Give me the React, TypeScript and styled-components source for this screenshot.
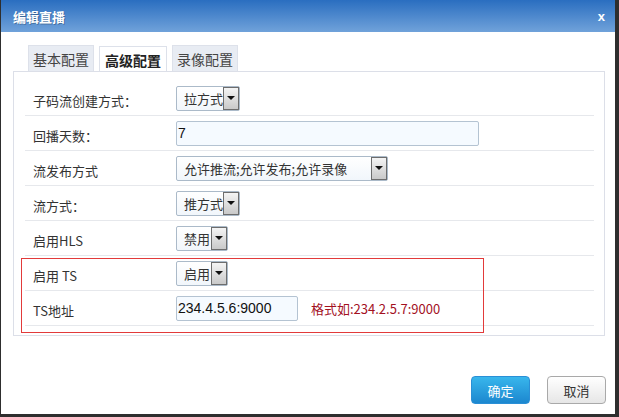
import styled, { createGlobalStyle } from "styled-components";

const GlobalStyle = createGlobalStyle`
  html, body {
    margin: 0;
    padding: 0;
    background: #2e2e2e;
  }
  body {
    font-family: "Noto Sans CJK SC", "Liberation Sans", sans-serif;
    font-size: 13px;
    color: #333;
  }
`;

const Dialog = styled.div`
  margin-left: 1px;
  width: 614px;
  height: 414px;
  background: #fff;
  display: flex;
  flex-direction: column;
`;

const Header = styled.div`
  height: 32px;
  display: flex;
  align-items: center;
  justify-content: space-between;
  padding: 0 10px 0 12px;
  background: linear-gradient(to bottom, #2a6ec0, #70a2da);
`;

const Title = styled.h1`
  margin: 0;
  color: #fff;
  font-size: 13px;
  font-weight: bold;
  text-shadow: 1px 1px 0 rgba(0, 0, 0, 0.25);
`;

const Close = styled.span`
  color: #fff;
  font-family: "Liberation Sans", sans-serif;
  font-weight: bold;
  font-size: 13px;
  line-height: 1;
`;

const Body = styled.div`
  padding: 13px 10px 0 12px;
`;

const TabBar = styled.div`
  display: flex;
  gap: 5px;
  padding-left: 15px;
`;

const Tab = styled.div<{ $active?: boolean }>`
  height: 26px;
  padding: 0 ${(p) => (p.$active ? "5px" : "4px")};
  box-sizing: border-box;
  display: flex;
  align-items: center;
  border: 1px solid #dde1ea;
  border-bottom: none;
  background: ${(p) => (p.$active ? "#fff" : "#e8ecf3")};
  color: ${(p) => (p.$active ? "#222" : "#444")};
  font-weight: ${(p) => (p.$active ? "bold" : "normal")};
  font-size: 14px;
  position: relative;
  top: ${(p) => (p.$active ? "1px" : "0")};
`;

const Panel = styled.div`
  position: relative;
  height: 265px;
  box-sizing: border-box;
  border: 1px solid #dcdfe8;
  padding: 9px 10px 0 11px;
`;

const Row = styled.div`
  display: flex;
  align-items: center;
  height: 34px;
  border-bottom: 1px solid #e6e8ec;
  padding-left: 8px;
`;

const Label = styled.div`
  width: 143px;
  flex-shrink: 0;
  font-size: 13px;
  color: #333;
  padding-top: 4px;
  white-space: pre;
`;

const SelectBox = styled.div<{ $w: number }>`
  width: ${(p) => p.$w}px;
  height: 25px;
  box-sizing: border-box;
  border: 1px solid #abbac9;
  border-radius: 2px;
  background: linear-gradient(to bottom, #fff, #f1f6fb);
  display: flex;
  align-items: stretch;
`;

const SelectText = styled.span`
  flex: 1;
  display: flex;
  align-items: center;
  padding-left: 7px;
  font-size: 13px;
  color: #333;
  white-space: nowrap;
  overflow: hidden;
`;

const Arrow = styled.span`
  width: 16px;
  box-sizing: border-box;
  border: 1px solid #6d6d6d;
  background: linear-gradient(to bottom, #f4f4f4, #c9c9c9);
  display: flex;
  align-items: center;
  justify-content: center;
  &::after {
    content: "";
    border-left: 4px solid transparent;
    border-right: 4px solid transparent;
    border-top: 4px solid #111;
  }
`;

const TextInput = styled.div<{ $w: number }>`
  width: ${(p) => p.$w}px;
  height: 25px;
  box-sizing: border-box;
  border: 1px solid #b4c3d2;
  border-radius: 2px;
  background: #f5faff;
  display: flex;
  align-items: center;
  padding-left: 1px;
  font-family: "Liberation Sans", sans-serif;
  font-size: 14px;
  color: #111;
`;

const Hint = styled.span`
  margin-left: 13px;
  color: #a3111f;
  font-size: 13px;
`;

const Highlight = styled.div`
  position: absolute;
  left: 7px;
  top: 186px;
  width: 463px;
  height: 75px;
  box-sizing: border-box;
  border: 1px solid #e23a3a;
  pointer-events: none;
`;

const Footer = styled.div`
  margin-top: auto;
  display: flex;
  justify-content: flex-end;
  gap: 17px;
  padding: 0 9px 10px 0;
`;

const Button = styled.button<{ $primary?: boolean }>`
  width: 59px;
  height: 28px;
  border-radius: 4px;
  font-family: "Noto Sans CJK SC", sans-serif;
  font-size: 13px;
  cursor: pointer;
  border: 1px solid ${(p) => (p.$primary ? "#2a8fd6" : "#a9a9a9")};
  color: ${(p) => (p.$primary ? "#fff" : "#333")};
  background: ${(p) =>
    p.$primary
      ? "linear-gradient(to bottom, #38b6ec, #1c87cf)"
      : "linear-gradient(to bottom, #ffffff, #e6e6e6)"};
`;

const Select = ({ w, value }: { w: number; value: string }) => (
  <SelectBox $w={w}>
    <SelectText>{value}</SelectText>
    <Arrow />
  </SelectBox>
);

const App = () => {
  return (
    <>
      <GlobalStyle />
      <Dialog>
        <Header>
          <Title>编辑直播</Title>
          <Close>x</Close>
        </Header>
        <Body>
          <TabBar>
            <Tab>基本配置</Tab>
            <Tab $active>高级配置</Tab>
            <Tab>录像配置</Tab>
          </TabBar>
          <Panel>
            <Row>
              <Label>子码流创建方式：</Label>
              <Select w={64} value="拉方式" />
            </Row>
            <Row>
              <Label>回播天数：</Label>
              <TextInput $w={303}>7</TextInput>
            </Row>
            <Row>
              <Label>流发布方式</Label>
              <Select w={212} value="允许推流;允许发布;允许录像" />
            </Row>
            <Row>
              <Label>流方式：</Label>
              <Select w={64} value="推方式" />
            </Row>
            <Row>
              <Label>启用HLS</Label>
              <Select w={52} value="禁用" />
            </Row>
            <Row>
              <Label>启用 TS</Label>
              <Select w={52} value="启用" />
            </Row>
            <Row>
              <Label>TS地址</Label>
              <TextInput $w={122}>234.4.5.6:9000</TextInput>
              <Hint>格式如:234.2.5.7:9000</Hint>
            </Row>
            <Highlight />
          </Panel>
        </Body>
        <Footer>
          <Button $primary>确定</Button>
          <Button>取消</Button>
        </Footer>
      </Dialog>
    </>
  );
};

export default App;
